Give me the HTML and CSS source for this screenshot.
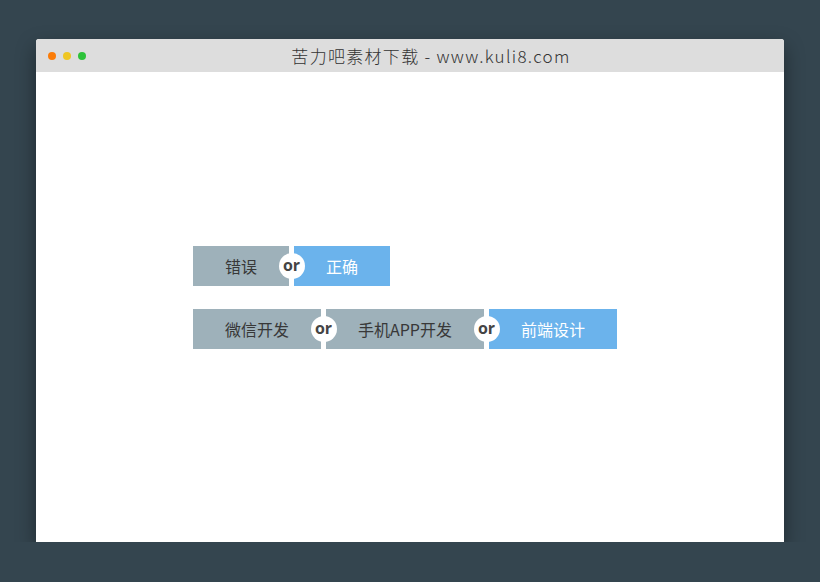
FILE: index.html
```html
<!DOCTYPE html>
<html>
<head>
  <meta charset="utf-8">
  <title>苦力吧素材下载</title>
  <link rel="stylesheet" href="styles.css">
</head>
<body>
  <div class="window">
    <div class="titlebar">
      <div class="dots">
        <span class="dot orange"></span>
        <span class="dot yellow"></span>
        <span class="dot green"></span>
      </div>
      <div class="title">苦力吧素材下载 - www.kuli8.com</div>
    </div>

    <div class="content">
      <div class="buttons">
        <button class="btn">错误</button>
        <div class="or"></div>
        <button class="btn blue">正确</button>
      </div>

      <div class="buttons">
        <button class="btn">微信开发</button>
        <div class="or"></div>
        <button class="btn">手机APP开发</button>
        <div class="or"></div>
        <button class="btn blue">前端设计</button>
      </div>
    </div>
  </div>
</body>
</html>
```

FILE: styles.css
```css
/* page */
body {
  margin: 0;
  padding: 39px 36px 0;
  background: #34454f;
  font-family: "Noto Sans CJK SC", "Noto Sans", sans-serif;
}

.window {
  width: 748px;
  height: 503px;
  background: #fff;
  border-radius: 3px 3px 0 0;
  overflow: hidden;
  box-shadow: 0 8px 20px rgba(0, 0, 0, 0.4);
}

/* title bar */
.titlebar {
  height: 33px;
  background: #dddddd;
  display: flex;
  align-items: center;
}

.dots {
  display: flex;
  gap: 7px;
  padding-left: 12px;
}

.dot {
  width: 8px;
  height: 8px;
  border-radius: 50%;
}

.orange { background: #fb7c08; }
.yellow { background: #efc623; }
.green  { background: #2dc23a; }

.title {
  flex: 1;
  text-align: center;
  padding-left: 108px;
  padding-right: 116px;
  font-size: 17px;
  font-weight: 300;
  color: #333;
  letter-spacing: 1.3px;
  line-height: 33px;
}

/* buttons */
.content {
  padding: 174px 0 0 157px;
  display: flex;
  flex-direction: column;
  gap: 23px;
}

.buttons {
  display: flex;
}

.btn {
  height: 40px;
  padding: 0 32px;
  border: 0;
  margin: 0;
  background: #9eb1ba;
  color: #383838;
  font-family: "Noto Sans CJK SC", "Noto Sans", sans-serif;
  font-size: 16px;
  line-height: 40px;
}

.btn.blue {
  background: #6bb3ec;
  color: #fff;
}

.or {
  width: 5px;
  height: 40px;
  background: #fff;
  position: relative;
  z-index: 1;
}

.or::before {
  content: "or";
  position: absolute;
  left: 50%;
  top: 50%;
  width: 26px;
  height: 26px;
  margin: -13px 0 0 -13px;
  border-radius: 50%;
  background: #fff;
  color: #444;
  font-family: "Open Sans", "Liberation Sans", sans-serif;
  font-size: 16px;
  font-weight: bold;
  line-height: 25px;
  text-align: center;
}
```
